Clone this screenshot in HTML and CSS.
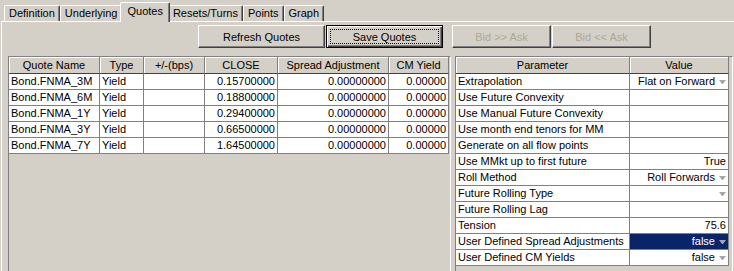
FILE: index.html
```html
<!DOCTYPE html>
<html lang="en">
<head>
  <meta charset="UTF-8" />
  <title>Quotes</title>
  <link rel="stylesheet" href="styles.css">
</head>
<body>
  <div class="tabs">
    <div class="tab">Definition</div>
    <div class="tab">Underlying</div>
    <div class="tab active">Quotes</div>
    <div class="tab">Resets/Turns</div>
    <div class="tab">Points</div>
    <div class="tab">Graph</div>
  </div>
  <div class="panel">
    <div class="toolbar">
      <button class="btn wide">Refresh Quotes</button>
      <button class="btn mid default">Save Quotes</button>
      <button class="btn narrow spaced" disabled>Bid &gt;&gt; Ask</button>
      <button class="btn narrow" disabled>Bid &lt;&lt; Ask</button>
    </div>
    <div class="tables">
      <div class="grid grid-left">
        <table class="quotes">
          <colgroup>
            <col class="q-name"><col class="q-type"><col class="q-bps"><col class="q-close"><col class="q-spread"><col class="q-cm">
          </colgroup>
          <thead>
            <tr><th>Quote Name</th><th>Type</th><th>+/-(bps)</th><th>CLOSE</th><th>Spread Adjustment</th><th>CM Yield</th></tr>
          </thead>
          <tbody>
            <tr><td>Bond.FNMA_3M</td><td>Yield</td><td></td><td class="num">0.15700000</td><td class="num">0.00000000</td><td class="num">0.00000</td></tr>
            <tr><td>Bond.FNMA_6M</td><td>Yield</td><td></td><td class="num">0.18800000</td><td class="num">0.00000000</td><td class="num">0.00000</td></tr>
            <tr><td>Bond.FNMA_1Y</td><td>Yield</td><td></td><td class="num">0.29400000</td><td class="num">0.00000000</td><td class="num">0.00000</td></tr>
            <tr><td>Bond.FNMA_3Y</td><td>Yield</td><td></td><td class="num">0.66500000</td><td class="num">0.00000000</td><td class="num">0.00000</td></tr>
            <tr><td>Bond.FNMA_7Y</td><td>Yield</td><td></td><td class="num">1.64500000</td><td class="num">0.00000000</td><td class="num">0.00000</td></tr>
          </tbody>
        </table>
      </div>
      <div class="grid grid-right">
        <table class="params">
          <colgroup>
            <col class="p-name"><col class="p-value">
          </colgroup>
          <thead>
            <tr><th>Parameter</th><th>Value</th></tr>
          </thead>
          <tbody>
            <tr><td>Extrapolation</td><td class="num">Flat on Forward<span class="arrow"></span></td></tr>
            <tr><td>Use Future Convexity</td><td></td></tr>
            <tr><td>Use Manual Future Convexity</td><td></td></tr>
            <tr><td>Use month end tenors for MM</td><td></td></tr>
            <tr><td>Generate on all flow points</td><td></td></tr>
            <tr><td>Use MMkt up to first future</td><td class="num">True</td></tr>
            <tr><td>Roll Method</td><td class="num">Roll Forwards<span class="arrow"></span></td></tr>
            <tr><td>Future Rolling Type</td><td class="num"><span class="arrow"></span></td></tr>
            <tr><td>Future Rolling Lag</td><td></td></tr>
            <tr><td>Tension</td><td class="num">75.6</td></tr>
            <tr><td>User Defined Spread Adjustments</td><td class="num sel">false<span class="arrow"></span></td></tr>
            <tr><td>User Defined CM Yields</td><td class="num">false<span class="arrow"></span></td></tr>
          </tbody>
        </table>
      </div>
    </div>
  </div>
</body>
</html>
```

FILE: styles.css
```css
html, body {
  margin: 0;
  overflow: hidden;
}
body {
  width: 734px;
  height: 271px;
  background-color: #d4d0c8;
  color: #000;
  font-family: "Liberation Sans", Arial, sans-serif;
  font-size: 11px;
}
/* Tab strip */
.tabs {
  display: flex;
  align-items: flex-end;
  height: 21px;
  padding-left: 4px;
}
.tab {
  height: 15px;
  line-height: 15px;
  padding: 0 4px 0 4px;
  border-top: 1px solid #fff;
  border-left: 1px solid #fff;
  border-right: 1px solid #404040;
  border-radius: 2px 2px 0 0;
  box-shadow: inset -1px 0 #808080;
  white-space: nowrap;
}
.tab.active {
  position: relative;
  z-index: 1;
  height: 18px;
  padding: 1px 6px 0;
  margin: 0 -2px -1px;
  background-color: #d4d0c8;
}
.panel {
  margin-left: 1px;
  border-top: 1px solid #fff;
  border-left: 1px solid #fff;
  padding: 3px 0 0 6px;
}
/* Buttons */
.toolbar {
  display: flex;
  margin-left: 190px;
  margin-bottom: 8px;
}
.btn {
  height: 23px;
  padding: 0;
  margin: 0 1px 0 0;
  font-family: inherit;
  font-size: 11px;
  color: #000;
  background-color: #d4d0c8;
  border: 1px solid;
  border-color: #fff #404040 #404040 #fff;
  box-shadow: inset -1px -1px #808080;
}
.btn.wide {
  width: 127px;
}
.btn.mid {
  width: 117px;
}
.btn.narrow {
  width: 99px;
}
.btn.spaced {
  margin-left: 8px;
}
.btn.default {
  border-color: #000;
  box-shadow: inset 1px 1px #fff, inset -1px -1px #404040, inset -2px -2px #808080;
  outline: 1px dotted #000;
  outline-offset: -5px;
}
.btn:disabled {
  color: #aca899;
}
/* Grids */
.tables {
  display: flex;
  gap: 4px;
}
.grid {
  height: 220px;
  border: 1px solid;
  border-color: #808080 #fff #fff #808080;
  overflow: hidden;
}
.grid-left {
  width: 441px;
}
.grid-right {
  width: 276px;
}
table {
  table-layout: fixed;
  border-collapse: separate;
  border-spacing: 0;
}
.quotes {
  width: 440px;
}
.params {
  width: 273px;
}
.q-name { width: 91px; }
.q-type { width: 44px; }
.q-bps { width: 61px; }
.q-close { width: 73px; }
.q-spread { width: 111px; }
.q-cm { width: 60px; }
.p-name { width: 174px; }
.p-value { width: 99px; }
th, td {
  padding: 0 2px;
  line-height: 15px;
  white-space: nowrap;
  overflow: hidden;
  font-weight: normal;
}
th {
  line-height: 16px;
  text-align: center;
  background-color: #d4d0c8;
  border-right: 1px solid #808080;
  border-bottom: 1px solid #404040;
  box-shadow: inset 1px 1px #fff;
}
td {
  text-align: left;
  background-color: #fff;
  border-right: 1px solid #808080;
  border-bottom: 1px solid #808080;
}
td.num {
  text-align: right;
}
td.sel {
  background-color: #0a246a;
  color: #fff;
}
.arrow {
  display: inline-block;
  width: 1px;
  height: 0;
  margin-left: 4px;
  vertical-align: middle;
  border-left: 3px solid transparent;
  border-right: 3px solid transparent;
  border-top: 4px solid #a6a6a6;
}
```
